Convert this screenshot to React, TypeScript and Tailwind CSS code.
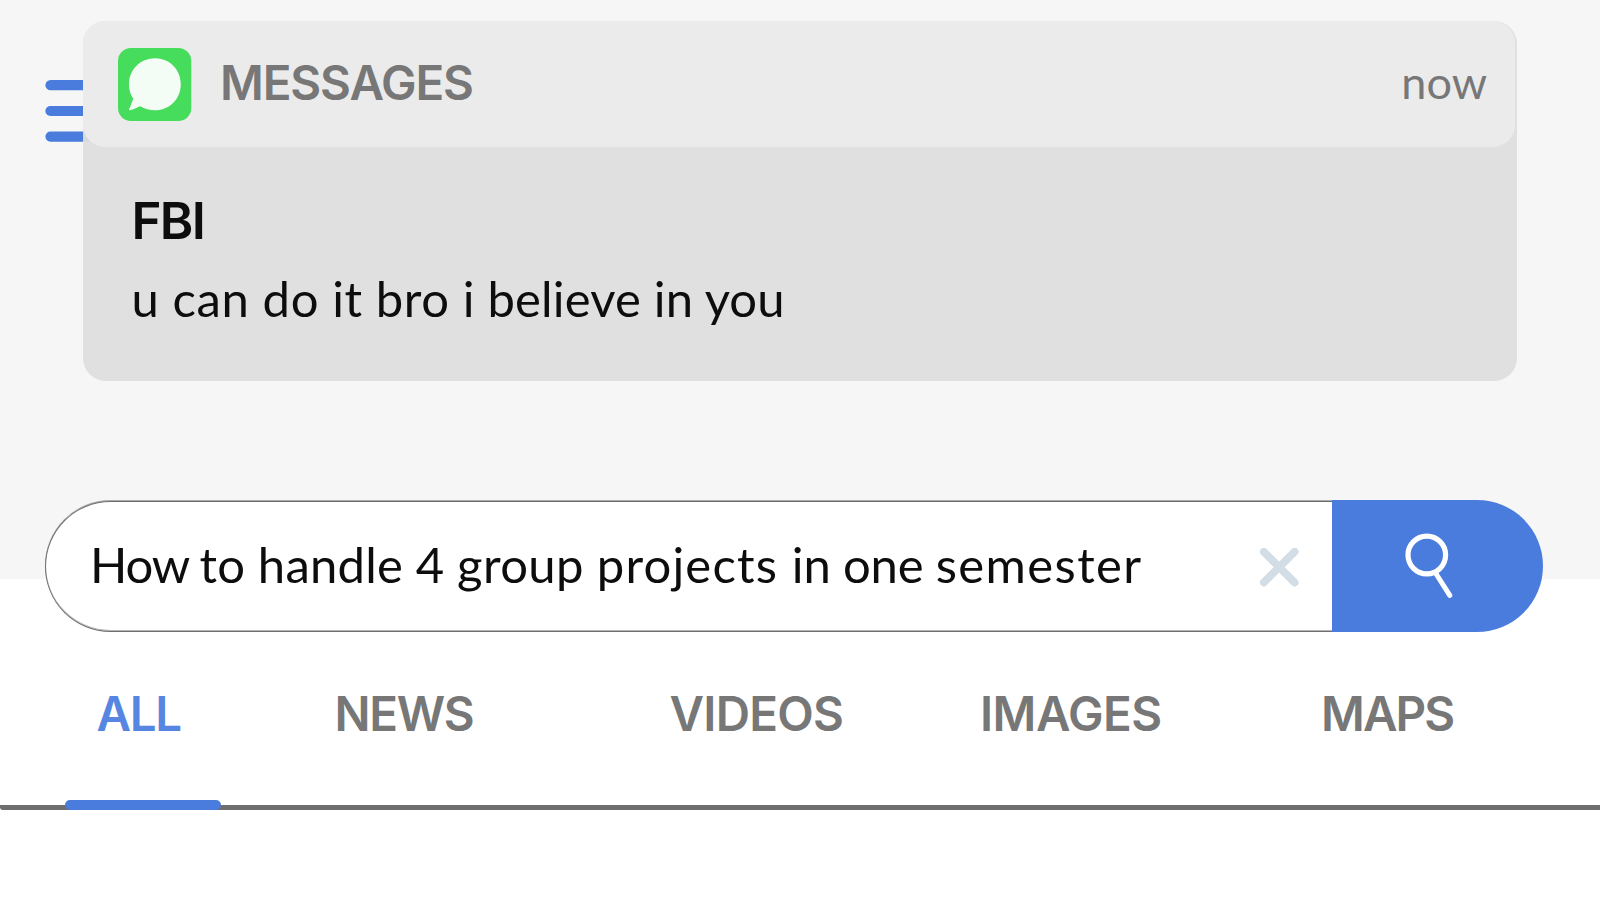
import React from 'react';

function MenuIcon() {
  return (
    <svg className="absolute left-[45px] top-[80px]" width="100" height="62" viewBox="0 0 100 62" fill="#4a7cde">
      <rect x="0.400" y="0" width="99" height="10.300" rx="5.150" />
      <rect x="0.400" y="26" width="99" height="10" rx="5" />
      <rect x="0.400" y="51.500" width="99" height="10.200" rx="5.100" />
    </svg>
  );
}

function MessagesIcon() {
  return (
    <svg width="74" height="74" viewBox="0 0 74 74" className="mt-[2px] shrink-0">
      <rect x="0" y="0" width="73.3" height="73" rx="13" fill="#46dc5c" />
      <path
        d="M37 10.300 C51.500 10.300 62.800 21.500 62.800 36.200 C62.800 51 51.500 62.300 37 62.300 C31.600 62.300 26.500 60.800 22.300 58.200 C18.800 59.500 15.500 61.600 12 62.200 C11 62.300 10.700 61.800 11.200 61 C12.900 58 13.700 54 15.300 50.700 C12.300 46.500 11 41.500 11 36.200 C11 21.500 22.500 10.300 37 10.300 Z"
        fill="#f4fdf5"
      />
    </svg>
  );
}

function Notification() {
  return (
    <section className="relative h-[360px] w-[1434px] rounded-[23px] bg-[#dedede]/95">
      <header className="flex h-[126px] w-[1432px] items-center rounded-[22px] bg-[#ebebeb] pl-[35px] pr-[28px]">
        <MessagesIcon />
        <h2 className="mb-[2px] ml-[28px] font-['Inter',sans-serif] text-[47.5px] leading-[60px] font-semibold tracking-[-1.12px] text-[#777777]">
          MESSAGES
        </h2>
        <time className="mb-[5px] ml-auto font-['Lato',sans-serif] text-[45px] leading-[60px] text-[#777777]">now</time>
      </header>
      <div className="pl-[48.500px] pt-[44px] text-[#0d0d0d]">
        <h3 className="font-['Inter',sans-serif] text-[51px] leading-[60px] font-semibold tracking-[-1.7px]">FBI</h3>
        <p className="mt-[17px] font-['Lato',sans-serif] text-[49px] leading-[60px] whitespace-nowrap">
          <span className="tracking-[0.6px]">u can do it bro </span>
          <span className="tracking-[0.16px]">i believe in you</span>
        </p>
      </div>
    </section>
  );
}

function SearchBar() {
  return (
    <form className="flex h-[132px] w-[1498px] items-end">
      <div className="flex h-[131px] flex-1 items-center rounded-l-[66px] border border-r-0 border-[#6e6e6e] bg-white pl-[44px] pr-[33px] shadow-[0_-1px_0_#aaaaaa,inset_0_-1px_0_#b4b4b4]">
        <span className="mb-[6px] w-0 flex-1 font-['Lato',sans-serif] text-[49px] leading-[60px] whitespace-nowrap text-[#0d0d0d]">
          <span className="tracking-[-1.15px]">How </span>
          <span className="tracking-[0.2px]">to handle 4 </span>
          <span className="tracking-[0.38px]">group </span>
          <span className="tracking-[1.18px]">projects </span>
          <span className="tracking-[-0.2px]">in one </span>
          <span className="tracking-[1.4px]">semester</span>
        </span>
        <svg width="39" height="39" viewBox="0 0 39 39" className="mt-[2px] shrink-0" fill="none" stroke="#d2dde6" strokeWidth="7.800" strokeLinecap="round">
          <path d="M3.800 3.700 L34.600 34.500 M34.600 3.700 L3.800 34.500" />
        </svg>
      </div>
      <button type="button" className="flex h-[132px] w-[210.600px] items-start rounded-r-[66px] bg-[#4a7cde] pl-[73px] pt-[33px]">
        <svg width="50" height="66" viewBox="0 0 50 66" fill="none" stroke="#ffffff">
          <circle cx="21.800" cy="22" r="18.800" strokeWidth="5.200" />
          <path d="M31.200 41 L44.800 62.300" strokeWidth="5" strokeLinecap="round" />
        </svg>
      </button>
    </form>
  );
}

function Tabs() {
  return (
    <nav className="flex h-[60px] pl-[96.500px] font-['Inter',sans-serif] text-[47.5px] leading-[60px] font-semibold text-[#777777]">
      <a className="w-[238px] tracking-[-1.35px] text-[#5685e2]">ALL</a>
      <a className="w-[335px] tracking-[-1.3px]">NEWS</a>
      <a className="w-[310.500px] tracking-[-0.74px]">VIDEOS</a>
      <a className="w-[341px] tracking-[-0.54px]">IMAGES</a>
      <a className="tracking-[-1.93px]">MAPS</a>
    </nav>
  );
}

export default function App() {
  return (
    <main className="relative h-[900px] w-[1600px] overflow-hidden bg-[linear-gradient(#f6f6f6_579px,#ffffff_579px)]">
      <MenuIcon />
      <div className="pl-[83px] pt-[21px]">
        <Notification />
      </div>
      <div className="mt-[119px] pl-[45px]">
        <SearchBar />
      </div>
      <div className="mt-[52px]">
        <Tabs />
      </div>
      <div className="mt-[56px] flex h-[10px] items-end rounded-bl-[3px] bg-[linear-gradient(transparent_5px,#6e6e6e_5px)] pl-[64.500px]">
        <span className="h-[10px] w-[156.500px] rounded-full bg-[#4a7cde]" />
      </div>
    </main>
  );
}
